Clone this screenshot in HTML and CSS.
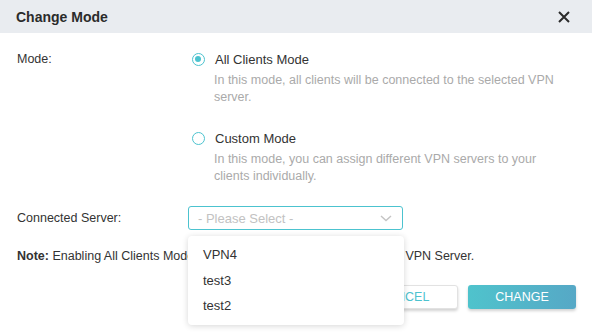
FILE: index.html
```html
<!DOCTYPE html>
<html lang="en">
<head>
  <meta charset="UTF-8" />
  <title>Change Mode</title>
  <link rel="stylesheet" href="styles.css">
</head>
<body>
  <div class="dialog">
    <div class="dialog-header">
      <span class="dialog-title">Change Mode</span>
      <svg class="close" width="12" height="12" viewBox="0 0 12 12">
        <path d="M1 1L11 11M11 1L1 11" stroke="#2b2b2b" stroke-width="2" fill="none"/>
      </svg>
    </div>

    <div class="dialog-body">
      <div class="row">
        <div class="label">Mode:</div>
        <div class="control">
          <div class="radio-line">
            <span class="radio checked"></span>
            <span>All Clients Mode</span>
          </div>
          <p class="desc">In this mode, all clients will be connected to the selected VPN server.</p>

          <div class="radio-line">
            <span class="radio"></span>
            <span>Custom Mode</span>
          </div>
          <p class="desc">In this mode, you can assign different VPN servers to your clients individually.</p>
        </div>
      </div>

      <div class="row row-select">
        <div class="label">Connected Server:</div>
        <div class="control">
          <div class="select">
            <span class="placeholder">- Please Select -</span>
            <svg width="12" height="7" viewBox="0 0 12 7">
              <path d="M1 1L6 5.5L11 1" stroke="#c4c4c4" stroke-width="1.4" fill="none"/>
            </svg>
            <!-- opened list -->
            <ul class="dropdown">
              <li>VPN4</li>
              <li>test3</li>
              <li>test2</li>
            </ul>
          </div>
        </div>
      </div>

      <p class="note"><b>Note:</b> Enabling All Clients Mode will connect all clients to the selected VPN Server.</p>

      <div class="buttons">
        <button class="btn btn-cancel">CANCEL</button>
        <button class="btn btn-change">CHANGE</button>
      </div>
    </div>
  </div>
</body>
</html>
```

FILE: styles.css
```css
* {
  box-sizing: border-box;
}
body {
  margin: 0;
  background: #fff;
  font-family: "Liberation Sans", Arial, sans-serif;
  font-size: 12.5px;
  color: #333;
}
.dialog {
  width: 592px;
  height: 336px;
  overflow: hidden;
}
.dialog-header {
  height: 33px;
  background: #e9ecf0;
  display: flex;
  align-items: center;
  justify-content: space-between;
  padding: 0 22px 0 16px;
}
.dialog-title {
  font-weight: 700;
  font-size: 14px;
  color: #2b2b2b;
}
.dialog-body {
  padding: 18px 16px 0 17px;
}
.row {
  display: flex;
}
.label {
  width: 171px;
  line-height: 17px;
}
.control {
  flex: 1;
}
.radio-line {
  display: flex;
  align-items: center;
  height: 17px;
  margin-left: 4px;
  font-size: 13px;
}
.radio {
  width: 13px;
  height: 13px;
  border: 1.5px solid #4cc3cf;
  border-radius: 50%;
  margin-right: 10px;
  position: relative;
}
.radio.checked::after {
  content: "";
  position: absolute;
  left: 2px;
  top: 2px;
  width: 6px;
  height: 6px;
  border-radius: 50%;
  background: #4cc3cf;
}
.desc {
  margin: 4px 0 24px 26px;
  color: #aaa;
  line-height: 17px;
  max-width: 358px;
}
.row-select {
  margin-top: -3px;
  align-items: center;
}
.select {
  position: relative;
  width: 215px;
  height: 24px;
  border: 1px solid #4cc3cf;
  border-radius: 3px;
  display: flex;
  align-items: center;
  justify-content: space-between;
  padding: 0 10px 0 9px;
}
.placeholder {
  color: #c2c2c2;
  font-size: 13px;
}
.dropdown {
  position: absolute;
  top: 29px;
  left: -1px;
  width: 216px;
  margin: 0;
  padding: 6px 0;
  list-style: none;
  background: #fff;
  border-radius: 4px;
  box-shadow: 0 1px 6px rgba(0, 0, 0, 0.16);
  z-index: 2;
}
.dropdown li {
  height: 25.5px;
  line-height: 25px;
  padding-left: 15px;
  font-size: 13px;
  color: #333;
}
.note {
  margin: 18px 0 0;
  line-height: 17px;
}
.buttons {
  display: flex;
  justify-content: flex-end;
  gap: 10px;
  margin-top: 20px;
}
.btn {
  width: 108px;
  height: 24px;
  border-radius: 3px;
  font-family: "Liberation Sans", Arial, sans-serif;
  font-size: 12.5px;
  box-shadow: 0 2px 3px rgba(0, 0, 0, 0.18);
}
.btn-cancel {
  background: #fff;
  border: 1px solid #e2e2e2;
  color: #4cc3cf;
}
.btn-change {
  background: linear-gradient(90deg, #4fc3cc, #56a8c6);
  border: none;
  color: #fff;
}
```
